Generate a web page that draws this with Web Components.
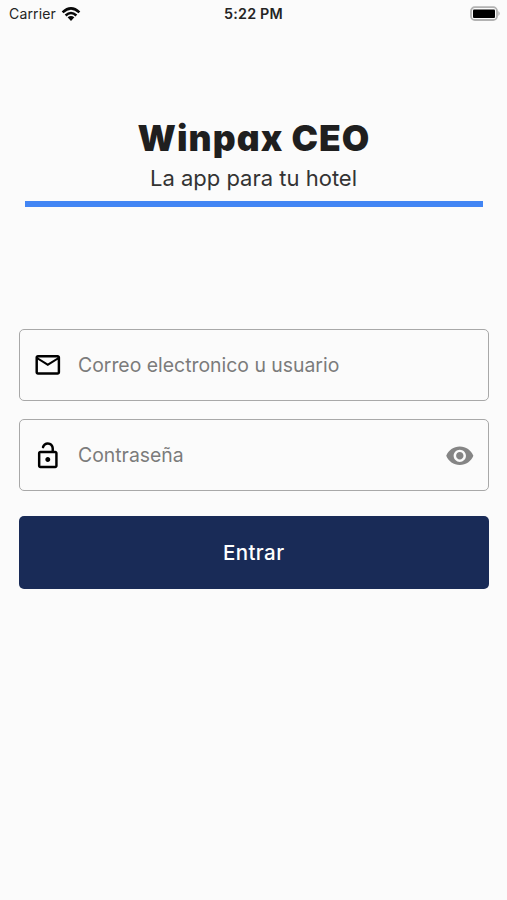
<!DOCTYPE html>
<html lang="es">
<head>
<meta charset="UTF-8">
<title>Winpax CEO</title>
<style>
    body {
        margin: 0;
        background: #fbfbfb;
        font-family: Inter, "Liberation Sans", sans-serif;
    }
</style>
</head>
<body>
<login-page></login-page>
<script>
class StatusBar extends HTMLElement{
    constructor(){
        super();
        this.attachShadow({mode:"open"})
    }
    connectedCallback(){
        this.shadowRoot.innerHTML = `
        <style>
            :host {
                display: grid;
                grid-template-columns: 1fr auto 1fr;
                align-items: center;
                height: 28px;
                padding: 0 6px 0 9px;
                box-sizing: border-box;
                font-size: 14px;
                line-height: 28px;
                color: #242424;
            }
            .red {
                display: flex;
                align-items: center;
                gap: 5px;
                padding-bottom: 2px;
            }
            .carrier {
                letter-spacing: 0.15px;
            }
            .hora {
                font-weight: 600;
                font-size: 14.3px;
                letter-spacing: 0.2px;
                margin-left: -3px;
                padding-bottom: 2px;
            }
            .bateria {
                justify-self: end;
                padding-bottom: 2px;
            }
            svg {
                display: block;
            }
        </style>
        <div class="red">
            <span class="carrier">Carrier</span>
            <svg class="wifi" width="20" height="16" viewBox="0 0 20 16">
                <g fill="none" stroke="#080808" stroke-width="2.6">
                    <path d="M1.6 6.4 Q10 -1.6 18.4 6.4"/>
                    <path d="M4.6 9.5 Q10 4.5 15.4 9.5"/>
                </g>
                <path d="M6.6 11.3 Q10 8.5 13.4 11.3 L10 14.9z" fill="#080808"/>
            </svg>
        </div>
        <span class="hora">5:22 PM</span>
        <svg class="bateria" width="31" height="16" viewBox="0 0 31 16">
            <rect x="1" y="1.2" width="26" height="12.8" rx="3.8" fill="#fbfbfb" stroke="#b2b2b2" stroke-width="1.8"/>
            <rect x="3" y="3.4" width="22" height="8.6" rx="1" fill="#000"/>
            <path d="M28.4 5 Q31 7.5 28.4 10z" fill="#aaa"/>
        </svg>
        `;
    }
}
customElements.define('status-bar',StatusBar);

class BrandHeader extends HTMLElement{
    constructor(){
        super();
        this.attachShadow({mode:"open"})
    }
    connectedCallback(){
        this.shadowRoot.innerHTML = `
        <style>
            :host {
                display: block;
                text-align: center;
                border-bottom: 6px solid #4285f4;
            }
            h1 {
                margin: 0;
                padding: 1px 0 3px 1px;
                font-size: 35.5px;
                line-height: 44px;
                font-weight: 900;
                letter-spacing: 1.05px;
                font-feature-settings: "cv11";
                color: #1f1f1f;
            }
            p {
                margin: 0;
                font-size: 22px;
                line-height: 28px;
                color: #333;
                padding-bottom: 9px;
            }
        </style>
        <h1><slot name="titulo"></slot></h1>
        <p><slot name="lema"></slot></p>
        `;
    }
}
customElements.define('brand-header',BrandHeader);

const ICONOS = {
    mail: "M22 6c0-1.1-.9-2-2-2H4c-1.1 0-2 .9-2 2v12c0 1.1.9 2 2 2h16c1.1 0 2-.9 2-2V6zm-2 0l-8 5-8-5h16zm0 12H4V8l8 5 8-5v10z",
    lock: "M12 17c1.1 0 2-.9 2-2s-.9-2-2-2-2 .9-2 2 .9 2 2 2zm6-9h-1V6c0-2.76-2.24-5-5-5-2.28 0-4.27 1.54-4.84 3.75-.14.54.18 1.08.72 1.22.53.14 1.08-.18 1.22-.72C9.44 3.93 10.63 3 12 3c1.65 0 3 1.35 3 3v2H6c-1.1 0-2 .9-2 2v10c0 1.1.9 2 2 2h12c1.1 0 2-.9 2-2V10c0-1.1-.9-2-2-2zm0 12H6V10h12v10z",
    eye: "M12 4.5C7 4.5 2.73 7.61 1 12c1.73 4.39 6 7.5 11 7.5s9.27-3.11 11-7.5c-1.73-4.39-6-7.5-11-7.5zM12 17c-2.76 0-5-2.24-5-5s2.24-5 5-5 5 2.24 5 5-2.24 5-5 5zm0-8c-1.66 0-3 1.34-3 3s1.34 3 3 3 3-1.34 3-3-1.34-3-3-3z"
};

class MaterialIcon extends HTMLElement{
    constructor(){
        super();
        this.attachShadow({mode:"open"})
    }
    connectedCallback(){
        this.shadowRoot.innerHTML = `
        <style>
            :host {
                display: block;
                flex: none;
                width: 29.6px;
                height: 29.6px;
            }
            svg {
                display: block;
                width: 100%;
                height: 100%;
                fill: currentColor;
            }
        </style>
        <svg viewBox="0 0 24 24"><path d="${ICONOS[this.getAttribute("name")]}"/></svg>
        `;
    }
}
customElements.define('material-icon',MaterialIcon);

class InputField extends HTMLElement{
    constructor(){
        super();
        this.attachShadow({mode:"open"})
    }
    connectedCallback(){
        this.shadowRoot.innerHTML = `
        <style>
            :host {
                display: flex;
                align-items: center;
                height: 72px;
                padding: 0 13.4px;
                box-sizing: border-box;
                border: 1.5px solid #a8a8a8;
                border-radius: 5px;
                color: #000;
            }
            .texto {
                flex: 1;
                margin-left: 15px;
                padding-bottom: 1px;
                font-size: 19.4px;
                line-height: 26px;
                color: #7b7b7b;
            }
            ::slotted([slot="fin"]) {
                color: #858585;
            }
        </style>
        <slot name="icono"></slot>
        <span class="texto"><slot></slot></span>
        <slot name="fin"></slot>
        `;
    }
}
customElements.define('input-field',InputField);

class SubmitButton extends HTMLElement{
    constructor(){
        super();
        this.attachShadow({mode:"open"})
    }
    connectedCallback(){
        this.shadowRoot.innerHTML = `
        <style>
            :host {
                display: block;
            }
            button {
                display: block;
                width: 100%;
                height: 73px;
                padding: 0;
                border: none;
                border-radius: 5px;
                background: #192b57;
                color: #fff;
                font: inherit;
                font-size: 20.5px;
                font-weight: 500;
                letter-spacing: 0.4px;
                cursor: pointer;
            }
        </style>
        <button><slot></slot></button>
        `;
    }
}
customElements.define('submit-button',SubmitButton);

class LoginPage extends HTMLElement{
    constructor(){
        super();
        this.attachShadow({mode:"open"})
    }
    connectedCallback(){
        this.shadowRoot.innerHTML = `
        <style>
            :host {
                display: block;
                min-height: 900px;
            }
            brand-header {
                margin: 88px 24.5px 0;
            }
            form {
                display: flex;
                flex-direction: column;
                margin: 122px 18.5px 0 19px;
            }
            input-field + input-field {
                margin-top: 18.4px;
            }
            submit-button {
                margin-top: 24.6px;
            }
        </style>
        <status-bar></status-bar>
        <brand-header>
            <span slot="titulo">Winpax CEO</span>
            <span slot="lema">La app para tu hotel</span>
        </brand-header>
        <form>
            <input-field>
                <material-icon slot="icono" name="mail"></material-icon>
                Correo electronico u usuario
            </input-field>
            <input-field>
                <material-icon slot="icono" name="lock"></material-icon>
                Contraseña
                <material-icon slot="fin" name="eye"></material-icon>
            </input-field>
            <submit-button>Entrar</submit-button>
        </form>
        `;
    }
}
customElements.define('login-page',LoginPage);
</script>
</body>
</html>
